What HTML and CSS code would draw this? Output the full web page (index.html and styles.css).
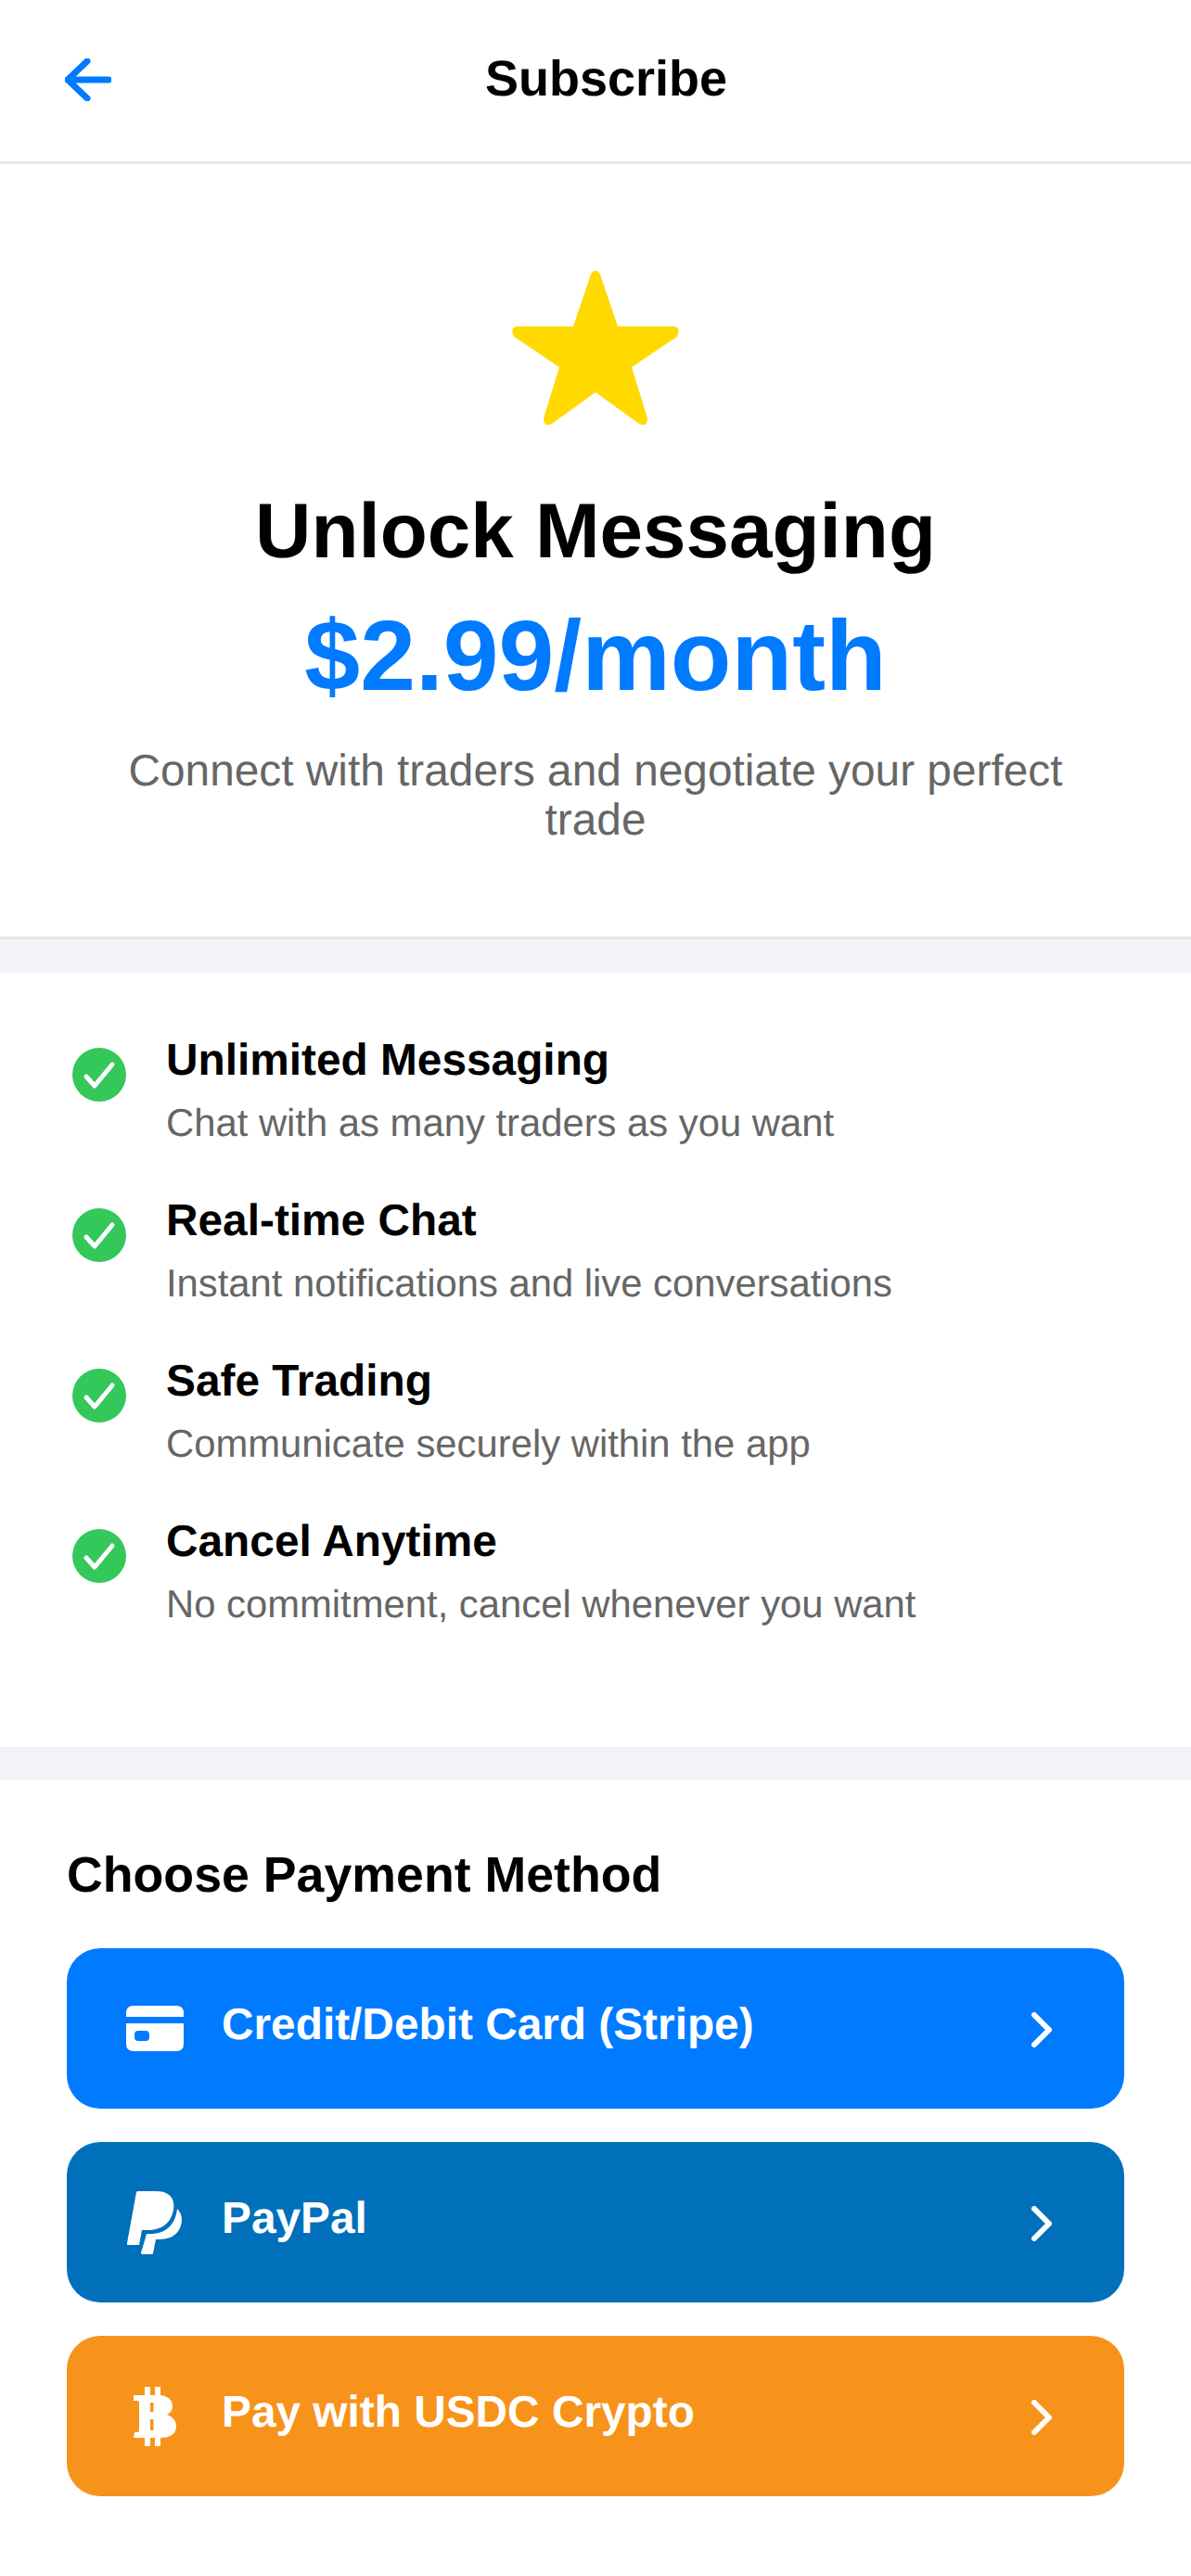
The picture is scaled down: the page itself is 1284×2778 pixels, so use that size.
FILE: index.html
```html
<!DOCTYPE html>
<html lang="en">
<head>
    <meta charset="UTF-8">
    <meta name="viewport" content="width=device-width, initial-scale=1.0">
    <title>Subscribe</title>

    <link rel="stylesheet" href="styles.css">
</head>
<body>

<header class="topbar">
    <svg class="back" width="50" height="46" viewBox="0 0 50 46">
        <path d="M24 3 L3 23 L24 43 M3 23 H47" fill="none" stroke="#007aff" stroke-width="7" stroke-linecap="round" stroke-linejoin="round"/>
    </svg>
    <h1 class="topbar-title">Subscribe</h1>
</header>

<section class="hero">
    <svg class="star" width="180" height="167" viewBox="0 0 180 167">
        <path d="M85 4 Q90 -5 95 4 L114 60 H174 Q183 61 178 71 L129 104 L146 159 Q146 169 137 165 L90 131 L43 165 Q34 169 34 159 L51 104 L2 71 Q-3 61 6 60 H66 Z" fill="#ffd900"/>
    </svg>
    <h2 class="hero-title">Unlock Messaging</h2>
    <p class="price">$2.99/month</p>
    <p class="hero-text">Connect with traders and negotiate your perfect trade</p>
</section>

<section class="features">
    <div class="feature">
        <svg class="check" width="58" height="58" viewBox="0 0 58 58">
            <circle cx="29" cy="29" r="29" fill="#34c759"/>
            <path d="M15 31 L24 41 L43 18" fill="none" stroke="#fff" stroke-width="5" stroke-linecap="round" stroke-linejoin="round"/>
        </svg>
        <div>
            <h3 class="feature-title">Unlimited Messaging</h3>
            <p class="feature-text">Chat with as many traders as you want</p>
        </div>
    </div>
    <div class="feature">
        <svg class="check" width="58" height="58" viewBox="0 0 58 58">
            <circle cx="29" cy="29" r="29" fill="#34c759"/>
            <path d="M15 31 L24 41 L43 18" fill="none" stroke="#fff" stroke-width="5" stroke-linecap="round" stroke-linejoin="round"/>
        </svg>
        <div>
            <h3 class="feature-title">Real-time Chat</h3>
            <p class="feature-text">Instant notifications and live conversations</p>
        </div>
    </div>
    <div class="feature">
        <svg class="check" width="58" height="58" viewBox="0 0 58 58">
            <circle cx="29" cy="29" r="29" fill="#34c759"/>
            <path d="M15 31 L24 41 L43 18" fill="none" stroke="#fff" stroke-width="5" stroke-linecap="round" stroke-linejoin="round"/>
        </svg>
        <div>
            <h3 class="feature-title">Safe Trading</h3>
            <p class="feature-text">Communicate securely within the app</p>
        </div>
    </div>
    <div class="feature">
        <svg class="check" width="58" height="58" viewBox="0 0 58 58">
            <circle cx="29" cy="29" r="29" fill="#34c759"/>
            <path d="M15 31 L24 41 L43 18" fill="none" stroke="#fff" stroke-width="5" stroke-linecap="round" stroke-linejoin="round"/>
        </svg>
        <div>
            <h3 class="feature-title">Cancel Anytime</h3>
            <p class="feature-text">No commitment, cancel whenever you want</p>
        </div>
    </div>
</section>

<section class="payment">
    <h2 class="payment-title">Choose Payment Method</h2>

    <div class="pay-btn stripe">
        <span class="pay-icon">
            <svg width="62" height="49" viewBox="0 0 62 49">
                <path d="M0 12 V8 Q0 0 8 0 H54 Q62 0 62 8 V12 Z" fill="#fff"/>
                <path fill-rule="evenodd" d="M0 19 H62 V41 Q62 49 54 49 H8 Q0 49 0 41 Z M13 27 Q9 27 9 31 V34 Q9 38 13 38 H21 Q25 38 25 34 V31 Q25 27 21 27 Z" fill="#fff"/>
            </svg>
        </span>
        <span class="pay-label">Credit/Debit Card (Stripe)</span>
        <svg class="chevron" width="22" height="38" viewBox="0 0 22 38">
            <path d="M3 3 L19 19 L3 35" fill="none" stroke="#fff" stroke-width="6" stroke-linecap="round" stroke-linejoin="round"/>
        </svg>
    </div>

    <div class="pay-btn paypal">
        <span class="pay-icon">
            <svg width="60" height="68" viewBox="0 0 60 68">
                <path d="M10 1 Q10.500 0 12 0 H31 C46 0 52 8 50 20 C47 36 36 42 22 42 H16 L13 58 H1 Q-0.500 58 0 56 Z" fill="#fff"/>
                <path d="M54 19 C59 24 60 30 58 37 C55 48 45 52 34 52 H31 L28 67 Q28 68 26 68 H16 Q15 68 15 66 L17 60 L21 46 H25 C42 46 52 36 54 19 Z" fill="#fff"/>
            </svg>
        </span>
        <span class="pay-label">PayPal</span>
        <svg class="chevron" width="22" height="38" viewBox="0 0 22 38">
            <path d="M3 3 L19 19 L3 35" fill="none" stroke="#fff" stroke-width="6" stroke-linecap="round" stroke-linejoin="round"/>
        </svg>
    </div>

    <div class="pay-btn crypto">
        <span class="pay-icon">
            <svg width="46" height="64" viewBox="0 0 46 64">
                <path fill-rule="evenodd" d="M12 0 H18 V9 H23 V0 H29 V9 C37 10 42 14 42 21 C42 25 40 28 36 30 C42 32 46 36 46 43 C46 51 39 55 29 55 V64 H23 V55 H18 V64 H12 V55 H0 L1 49 H3 C6 49 6 48 6 46 V18 C6 16 6 15 3 15 H0 V9 H12 Z M18 17 V27 H21.500 V17 Z M18 35 V47 H21.500 V35 Z" fill="#fff"/>
            </svg>
        </span>
        <span class="pay-label">Pay with USDC Crypto</span>
        <svg class="chevron" width="22" height="38" viewBox="0 0 22 38">
            <path d="M3 3 L19 19 L3 35" fill="none" stroke="#fff" stroke-width="6" stroke-linecap="round" stroke-linejoin="round"/>
        </svg>
    </div>
</section>

</body>
</html>
```

FILE: styles.css
```css
body {
    margin: 0;
    background-color: #ffffff;
    color: #000000;
    font-family: 'Liberation Sans', Arial, sans-serif;
    text-rendering: geometricPrecision;
}

h1, h2, h3, p {
    margin: 0;
}

/* top bar */
.topbar {
    height: 174px;
    border-bottom: 3px solid #e5e5ea;
    display: flex;
    align-items: center;
    padding-left: 70px;
}

.back {
    display: block;
    margin-top: -2px;
}

.topbar-title {
    flex: 1;
    text-align: center;
    font-size: 54px;
    font-weight: bold;
    line-height: 62px;
    padding-right: 97px;
    margin-top: -4px;
}

/* hero */
.hero {
    height: 836px;
    box-sizing: border-box;
    padding: 115px 72px 0;
    border-bottom: 3px solid #e5e5ea;
    text-align: center;
}

.star {
    display: block;
    margin: 0 auto;
}

.hero-title {
    font-size: 83.6px;
    font-weight: bold;
    line-height: 98px;
    margin-top: 64px;
}

.price {
    font-size: 107.5px;
    font-weight: bold;
    line-height: 124px;
    color: #007aff;
    margin-top: 24px;
}

.hero-text {
    font-size: 47.8px;
    line-height: 53px;
    color: #666666;
    margin: 36px 48px 0;
}

/* features */
.features {
    margin-top: 36px;
    padding: 65px 72px 114px 78px;
    box-shadow: 0 -36px 0 #f2f2f7;
    display: flex;
    flex-direction: column;
    gap: 36px;
}

.feature {
    display: flex;
    gap: 43px;
    height: 137px;
}

.check {
    flex: none;
    margin-top: 16px;
}

.feature-title {
    font-size: 47.8px;
    font-weight: bold;
    line-height: 60px;
}

.feature-text {
    font-size: 41.8px;
    line-height: 50px;
    color: #666666;
    margin-top: 12px;
}

/* payment */
.payment {
    border-top: 36px solid #f2f2f7;
    padding: 69px 72px 88px;
}

.payment-title {
    font-size: 53.7px;
    font-weight: bold;
    line-height: 66px;
    margin-bottom: 46px;
}

.pay-btn {
    height: 173px;
    border-radius: 36px;
    display: flex;
    align-items: center;
    color: #ffffff;
    margin-bottom: 36px;
}

.pay-btn:last-child {
    margin-bottom: 0;
}

.stripe { background-color: #007aff; }
.paypal { background-color: #0070ba; }
.crypto { background-color: #f7931a; }

.pay-icon {
    flex: none;
    width: 62px;
    margin-left: 64px;
    display: flex;
    justify-content: center;
}

.pay-icon svg {
    display: block;
}

.pay-label {
    flex: 1;
    font-size: 47.8px;
    font-weight: bold;
    line-height: 56px;
    margin-left: 41px;
    margin-bottom: 7px;
}

.chevron {
    flex: none;
    margin-right: 78px;
    margin-top: 3px;
}
```
